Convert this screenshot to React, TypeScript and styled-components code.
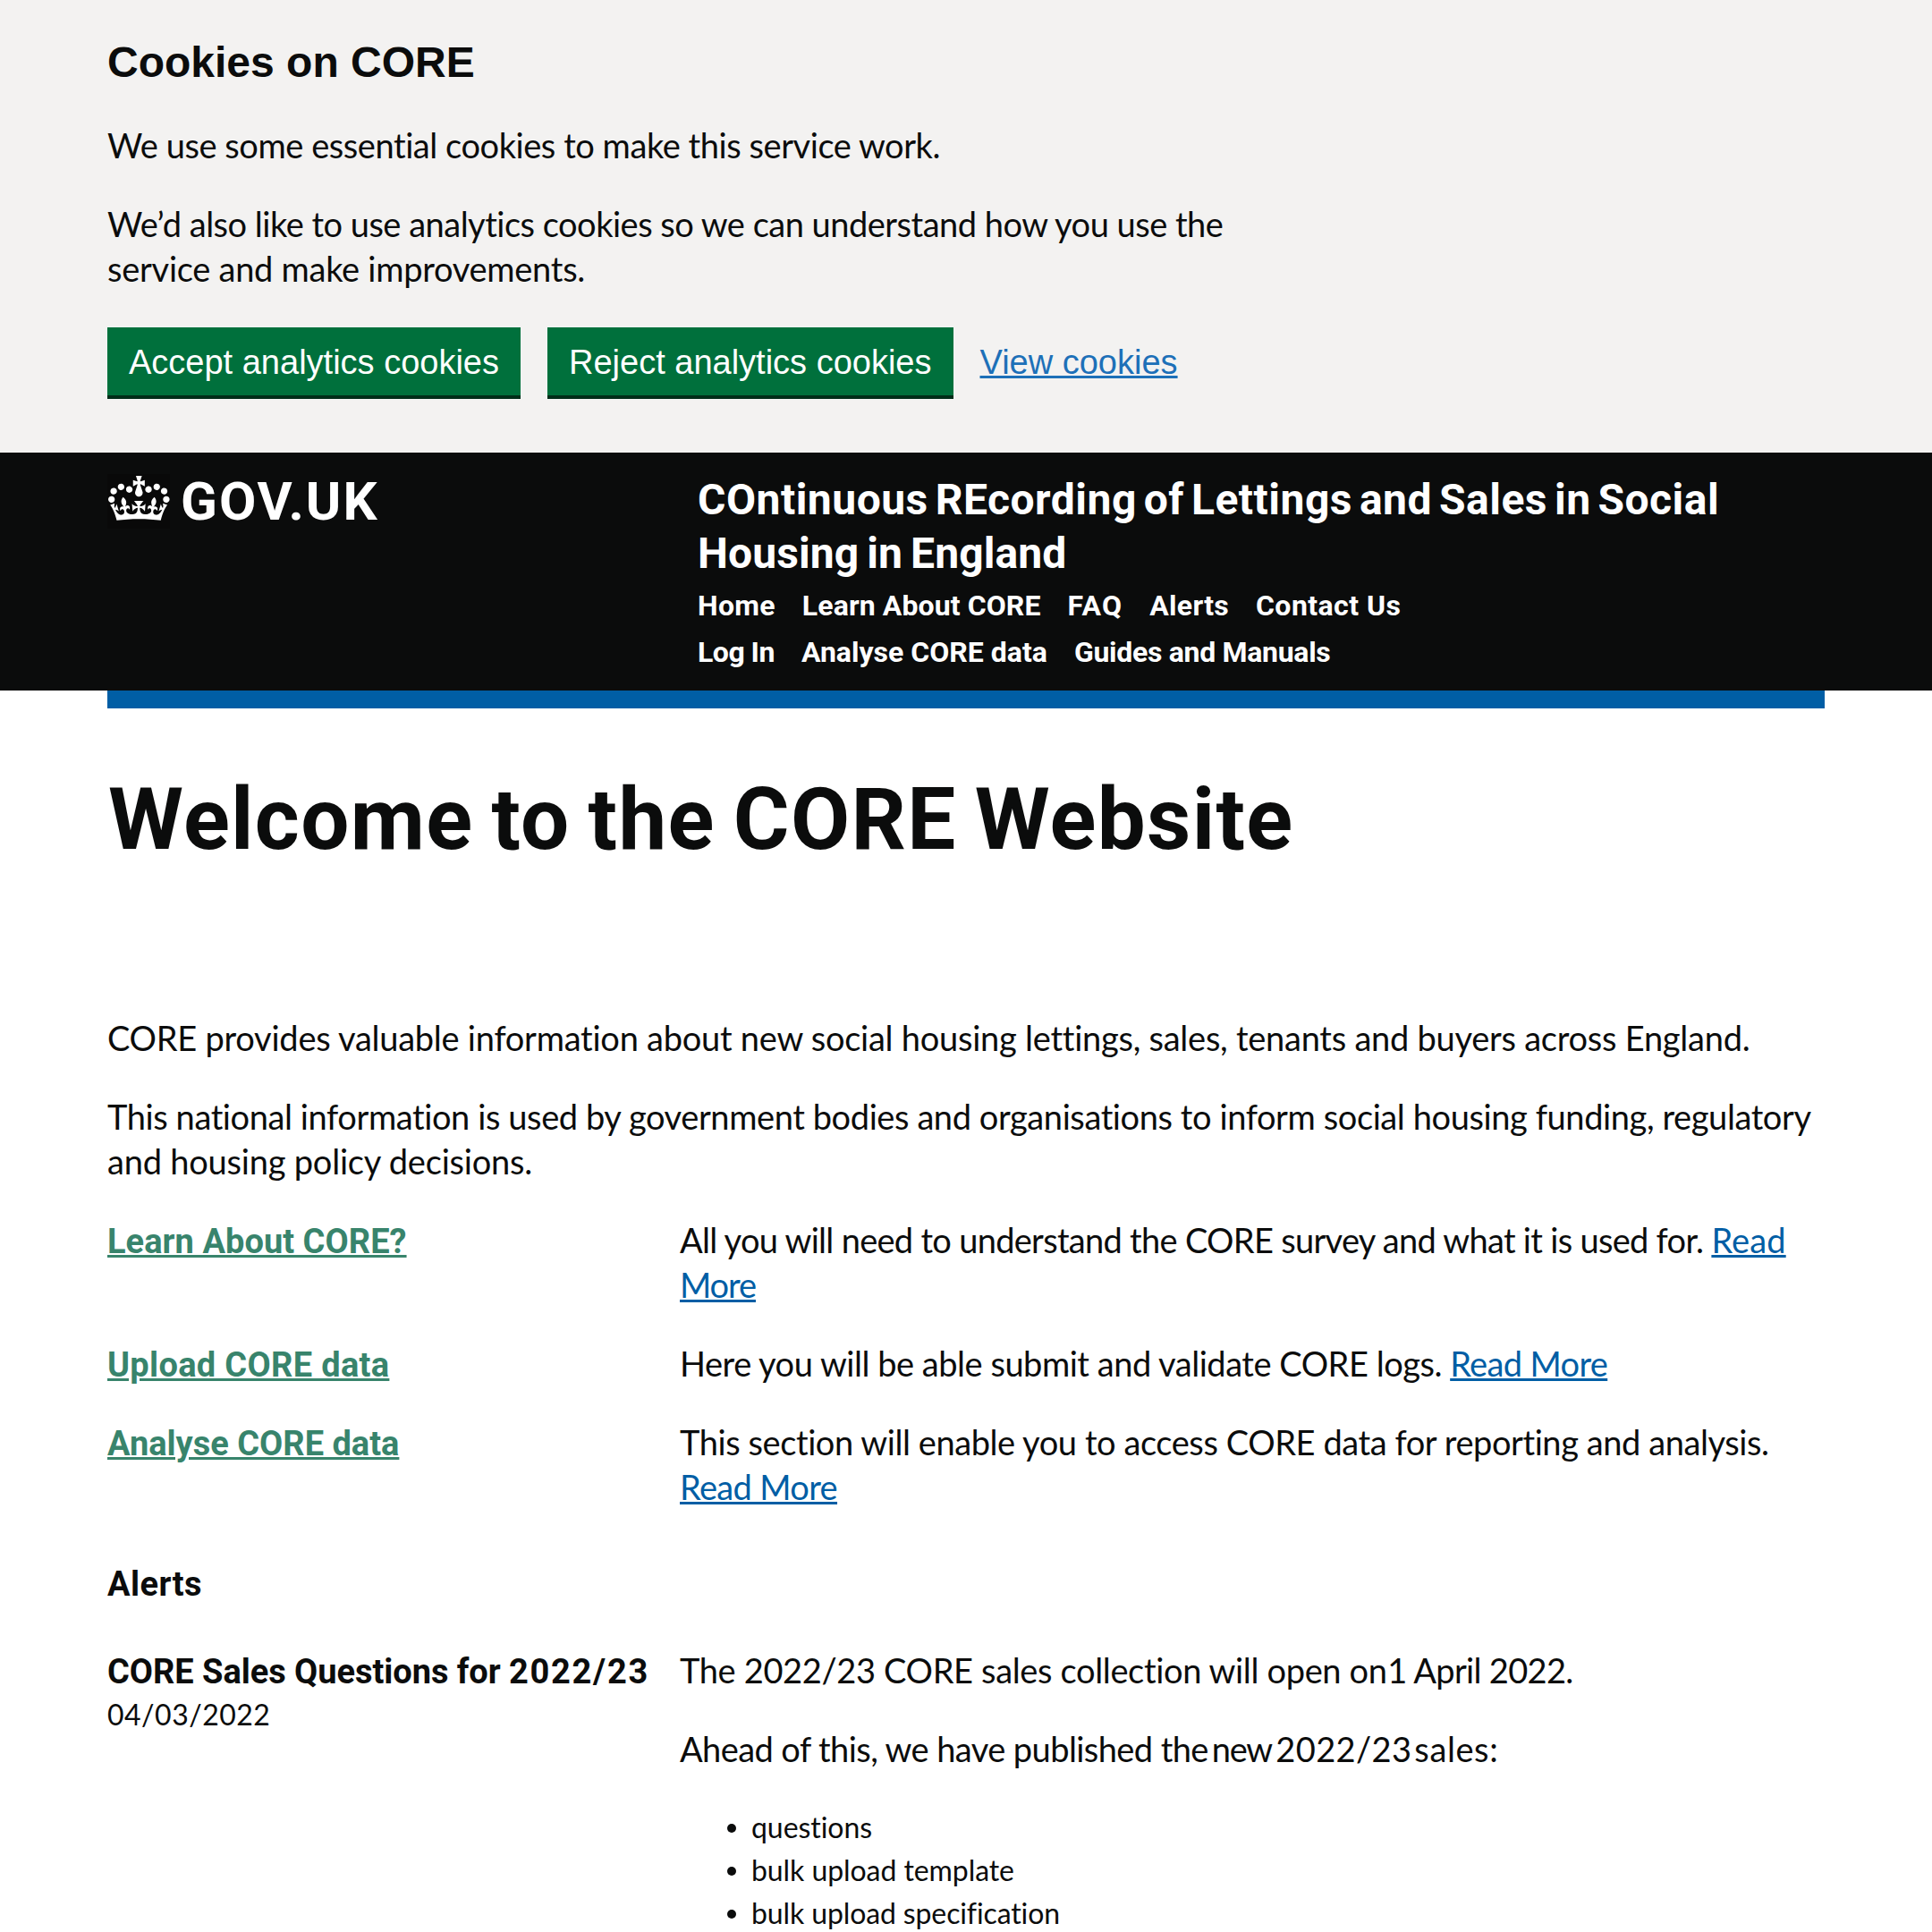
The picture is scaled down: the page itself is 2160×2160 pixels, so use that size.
import React from "react";
import styled, { createGlobalStyle } from "styled-components";

const INK = "#0b0c0c";

const GlobalStyle = createGlobalStyle`
  *, *::before, *::after { box-sizing: border-box; }
  body {
    margin: 0;
    background: #fff;
    color: ${INK};
    font-family: Roboto, "Liberation Sans", sans-serif;
    font-kerning: normal;
    font-variant-ligatures: none;
  }
  h1, h2, h3, p, ul { margin: 0; padding: 0; }
`;

const Page = styled.div`
  height: 100vh;
  overflow: hidden;
`;

/* One line of text with its tracking */
const Line = styled.span<{ $track?: number; $word?: number }>`
  display: block;
  white-space: pre;
  letter-spacing: ${(p) => p.$track ?? 0}px;
  word-spacing: ${(p) => p.$word ?? 0}px;
`;

const Run = styled.span<{ $track?: number; $gap?: number }>`
  letter-spacing: ${(p) => p.$track ?? 0}px;
  margin-left: ${(p) => p.$gap ?? 0}px;
`;

const Text = styled.p`
  margin: -1px 0 1px;
  font-family: Lato, "Liberation Sans", sans-serif;
  font-size: 38px;
  line-height: 50px;
`;

const Link = styled.a<{ $track?: number }>`
  color: #005ea5;
  letter-spacing: ${(p) => p.$track ?? 0}px;
  text-decoration: underline;
  text-decoration-thickness: 3px;
  text-underline-offset: 2px;
`;

/* Cookie banner */
const Banner = styled.section`
  height: 506px;
  padding: 40px 120px 0;
  background: #f3f2f1;
`;

const BannerTitle = styled.h2`
  margin-bottom: 38px;
  font: 700 48px/60px "Liberation Sans", Arial, sans-serif;
`;

const BannerCopy = styled.div`
  display: flex;
  flex-direction: column;
  gap: 38px;
`;

const Actions = styled.div`
  display: flex;
  align-items: flex-start;
  gap: 30px;
  margin-top: 40px;
  font: 38px/38px "Liberation Sans", Arial, sans-serif;
`;

const Button = styled.button`
  padding: 16px 20px 14px;
  border: 4px solid transparent;
  background: #00703c;
  box-shadow: 0 4px 0 #002d18;
  color: #fff;
  font: inherit;
  white-space: nowrap;
`;

const ViewLink = styled(Link)`
  padding-top: 20px;
  color: #1d70b8;
`;

/* Site header */
const Header = styled.header`
  display: grid;
  grid-template-columns: 660px 1fr;
  height: 266px;
  padding: 23px 120px 0;
  background: ${INK};
  color: #fff;
`;

const Logo = styled.div`
  display: flex;
  gap: 12px;
  height: 61px;
  margin-top: 1px;
  font-size: 60px;
  font-weight: 700;
  line-height: 61px;
  letter-spacing: 2px;
`;

const CrownBox = styled.div`
  width: 70px;
  height: 61px;
  padding: 2px 0 0 1px;
  background: #090909;
  line-height: 0;
`;

const ServiceName = styled.div`
  font-size: 48px;
  font-weight: 700;
  line-height: 60px;
`;

const Nav = styled.nav`
  margin-top: 2px;
`;

const NavRow = styled.div`
  display: flex;
  gap: 30px;
`;

const NavItem = styled.a<{ $track: number }>`
  color: #fff;
  font-size: 32px;
  font-weight: 700;
  line-height: 52px;
  letter-spacing: ${(p) => p.$track}px;
  white-space: nowrap;
`;

const Bar = styled.div`
  height: 20px;
  margin: 0 120px;
  background: #005ea5;
`;

/* Main content */
const Main = styled.main`
  padding: 74px 120px 0;
`;

const Title = styled.h1`
  margin-bottom: 170px;
  padding-left: 1px;
  font-size: 96px;
  font-weight: 700;
  line-height: 100px;
`;

const Stack = styled.div`
  display: flex;
  flex-direction: column;
  gap: 38px;
`;

const Row = styled.div`
  display: grid;
  grid-template-columns: 640px 1fr;
`;

const TopicCell = styled.div`
  margin: 1px 0 -1px;
`;

const Topic = styled(Link)`
  color: #38846c;
  font-size: 38px;
  font-weight: 700;
  line-height: 50px;
`;

const SectionTitle = styled.h2`
  margin: 58px 0 47px;
  font-size: 38px;
  line-height: 50px;
`;

const AlertTitle = styled.h3`
  padding-top: 1px;
  font-size: 38px;
  line-height: 50px;
`;

const AlertDate = styled.p`
  margin-top: 3px;
  font-family: Lato, "Liberation Sans", sans-serif;
  font-size: 32px;
  line-height: 40px;
`;

const List = styled.ul`
  padding-left: 53px;
  font-family: Lato, "Liberation Sans", sans-serif;
  list-style: none;
`;

const Item = styled.li`
  display: flex;
  gap: 17px;
  height: 48px;
  font-size: 32px;
  line-height: 48px;

  &::before {
    content: "";
    width: 10px;
    height: 10px;
    margin-top: 20px;
    border-radius: 50%;
    background: ${INK};
  }
`;

const Crown = () => (
  <svg width="68.6" height="50.4" viewBox="0 0 132 97" fill="#fff" aria-hidden="true">
    <path
      fillRule="evenodd"
      d="M25 30.2c3.5 1.5 7.7-.2 9.1-3.7 1.5-3.6-.2-7.8-3.9-9.2-3.6-1.4-7.6.3-9.1 3.9-1.4 3.5.3 7.5 3.9 9zM9 39.5c3.6 1.5 7.8-.2 9.2-3.7 1.5-3.6-.2-7.8-3.9-9.1-3.6-1.5-7.6.2-9.1 3.8-1.4 3.5.3 7.5 3.8 9zM4.4 57.2c3.5 1.5 7.7-.2 9.1-3.8 1.5-3.6-.2-7.7-3.9-9.1-3.5-1.5-7.6.3-9.1 3.8-1.4 3.5.3 7.6 3.9 9.1zm38.3-21.4c3.5 1.5 7.7-.2 9.1-3.8 1.5-3.6-.2-7.7-3.9-9.1-3.6-1.5-7.6.3-9.1 3.8-1.3 3.6.4 7.7 3.9 9.1zm64.4-5.6c-3.6 1.5-7.8-.2-9.1-3.7-1.5-3.6.2-7.8 3.8-9.2 3.6-1.4 7.7.3 9.2 3.9 1.3 3.5-.4 7.5-3.9 9zm15.9 9.3c-3.6 1.5-7.7-.2-9.1-3.7-1.5-3.6.2-7.8 3.7-9.1 3.6-1.5 7.7.2 9.2 3.8 1.5 3.5-.3 7.5-3.8 9zm4.7 17.7c-3.6 1.5-7.8-.2-9.2-3.8-1.5-3.6.2-7.7 3.9-9.1 3.6-1.5 7.7.3 9.2 3.8 1.3 3.5-.4 7.6-3.9 9.1zM89.3 35.8c-3.6 1.5-7.8-.2-9.2-3.8-1.4-3.6.2-7.7 3.9-9.1 3.6-1.5 7.7.3 9.2 3.8 1.4 3.6-.3 7.7-3.9 9.1zM69.7 17.7l8.9 4.7V9.3l-8.9 2.8c-.2-.3-.5-.6-.9-.9L72.4 0H59.6l3.5 11.2c-.3.3-.6.5-.9.9l-8.8-2.8v13.1l8.8-4.7c.3.3.6.7.9.9l-5 15.4v.1c-.2.8-.4 1.6-.4 2.4 0 4.1 3.1 7.5 7 8.1h.2c.3 0 .7.1 1 .1.4 0 .7 0 1-.1h.2c4-.6 7.1-4.1 7.1-8.1 0-.8-.1-1.7-.4-2.4V34l-5.1-15.4c.4-.2.7-.6 1-.9zM66 92.8c16.9 0 32.8 1.1 47.1 3.2 4-16.9 8.9-26.7 14-33.5l-9.6-3.4c1 4.9 1.1 7.2 0 10.2-1.5-1.4-3-4.3-4.2-8.7L108.6 76c2.8-2 5-3.2 7.5-3.3-4.4 9.4-10 11.9-13.6 11.2-4.3-.8-6.3-4.6-5.6-7.9 1-4.7 5.7-5.9 8-.5 4.3-8.7-3-11.4-7.6-8.8 7.1-7.2 7.9-13.5 2.1-21.1-8 6.1-8.1 12.3-4.5 20.8-4.7-5.4-12.1-2.5-9.5 6.2 3.4-5.2 7.9-2 7.2 3.1-.6 4.3-6.4 7.8-13.5 7.2-10.3-.9-10.9-8-11.2-13.8 2.5-.5 7.1 1.8 11 7.3L80.2 60c-4.1 4.4-8 5.3-12.3 5.4 1.4-4.4 8-11.6 8-11.6H55.5s6.4 7.2 7.9 11.6c-4.2-.1-8-1-12.3-5.4l1.4 16.4c3.9-5.5 8.5-7.7 10.9-7.3-.3 5.8-.9 12.8-11.1 13.8-7.2.6-12.9-2.9-13.5-7.2-.7-5 3.8-8.3 7.1-3.1 2.7-8.7-4.6-11.6-9.4-6.2 3.7-8.5 3.6-14.7-4.6-20.8-5.8 7.6-5 13.9 2.2 21.1-4.7-2.6-11.9.1-7.7 8.8 2.3-5.5 7.1-4.2 8.1.5.7 3.3-1.3 7.1-5.7 7.9-3.5.7-9-1.8-13.5-11.2 2.5.1 4.7 1.3 7.5 3.3l-4.7-15.4c-1.2 4.4-2.7 7.2-4.3 8.7-1.1-3-.9-5.3 0-10.2l-9.5 3.4c5 6.9 9.9 16.7 14 33.5 14.8-2.1 30.8-3.2 47.7-3.2z"
    />
  </svg>
);

const NAV: [string, number][][] = [
  [
    ["Home", 0.3],
    ["Learn About CORE", 0.1],
    ["FAQ", 1.27],
    ["Alerts", 0.27],
    ["Contact Us", 0.45],
  ],
  [
    ["Log In", -0.5],
    ["Analyse CORE data", 0.01],
    ["Guides and Manuals", -0.3],
  ],
];

const FILES: [string, number][] = [
  ["questions", -0.05],
  ["bulk upload template", -0.07],
  ["bulk upload specification", -0.12],
];

export default function App() {
  return (
    <Page>
      <GlobalStyle />
      <Banner>
        <BannerTitle>Cookies on CORE</BannerTitle>
        <BannerCopy>
          <Text>
            <Line $track={-0.44}>We use some essential cookies to make this service work.</Line>
          </Text>
          <Text>
            <Line $track={-0.5}>
              We’d also like to use analytics cookies so we can understand how you use the
            </Line>
            <Line $track={-0.27}>service and make improvements.</Line>
          </Text>
        </BannerCopy>
        <Actions>
          <Button>Accept analytics cookies</Button>
          <Button>Reject analytics cookies</Button>
          <ViewLink>View cookies</ViewLink>
        </Actions>
      </Banner>

      <Header>
        <Logo>
          <CrownBox>
            <Crown />
          </CrownBox>
          GOV.UK
        </Logo>
        <div>
          <ServiceName>
            <Line $track={0.5} $word={-4.5}>
              COntinuous REcording of Lettings and Sales in Social
            </Line>
            <Line $track={0.1} $word={-3}>
              Housing in England
            </Line>
          </ServiceName>
          <Nav>
            {NAV.map((row, i) => (
              <NavRow key={i}>
                {row.map(([label, track]) => (
                  <NavItem key={label} $track={track}>
                    {label}
                  </NavItem>
                ))}
              </NavRow>
            ))}
          </Nav>
        </div>
      </Header>
      <Bar />

      <Main>
        <Title>
          <Line $track={1.35} $word={-5.2}>
            Welcome to the CORE Website
          </Line>
        </Title>
        <Stack>
          <Text>
            <Line $track={-0.25}>
              CORE provides valuable information about new social housing lettings, sales, tenants and buyers across England.
            </Line>
          </Text>
          <Text>
            <Line $track={-0.405}>
              This national information is used by government bodies and organisations to inform social housing funding, regulatory
            </Line>
            <Line $track={-0.21}>and housing policy decisions.</Line>
          </Text>
          <Row>
            <TopicCell>
              <Topic $track={0.05}>Learn About CORE?</Topic>
            </TopicCell>
            <Text>
              <Line $track={-0.7}>
                {"All you will need to understand the CORE survey and what it is used for. "}
                <Link $track={0.12}>Read</Link>
              </Line>
              <Line>
                <Link $track={-1.1}>More</Link>
              </Line>
            </Text>
          </Row>
          <Row>
            <TopicCell>
              <Topic $track={0.32}>Upload CORE data</Topic>
            </TopicCell>
            <Text>
              <Line $track={-0.47}>
                {"Here you will be able submit and validate CORE logs. "}
                <Link $track={-0.65}>Read More</Link>
              </Line>
            </Text>
          </Row>
          <Row>
            <TopicCell>
              <Topic>Analyse CORE data</Topic>
            </TopicCell>
            <Text>
              <Line $track={-0.42}>
                This section will enable you to access CORE data for reporting and analysis.
              </Line>
              <Line>
                <Link $track={-0.65}>Read More</Link>
              </Line>
            </Text>
          </Row>
        </Stack>

        <SectionTitle>
          <Line $track={0.45}>Alerts</Line>
        </SectionTitle>
        <Row>
          <div>
            <AlertTitle>
              <Line>
                <Run $track={-0.04}>{"CORE Sales Questions for "}</Run>
                <Run $track={1.7}>2022/23</Run>
              </Line>
            </AlertTitle>
            <AlertDate>
              <Line $track={0.5}>04/03/2022</Line>
            </AlertDate>
          </div>
          <Stack>
            <Text>
              <Line>
                <Run $track={-0.35}>The 2022/23 CORE sales collection will open on</Run>
                <Run $track={-0.67} $gap={0.5}>1 April 2022.</Run>
              </Line>
            </Text>
            <Text>
              <Line>
                <Run $track={-0.58}>Ahead of this, we have published the</Run>
                <Run $track={-1.3} $gap={4}>new</Run>
                <Run $track={0.37} $gap={4.5}>2022/23</Run>
                <Run $track={0.6} $gap={3}>sales:</Run>
              </Line>
            </Text>
            <List>
              {FILES.map(([label, track]) => (
                <Item key={label}>
                  <Line $track={track}>{label}</Line>
                </Item>
              ))}
            </List>
          </Stack>
        </Row>
      </Main>
    </Page>
  );
}
